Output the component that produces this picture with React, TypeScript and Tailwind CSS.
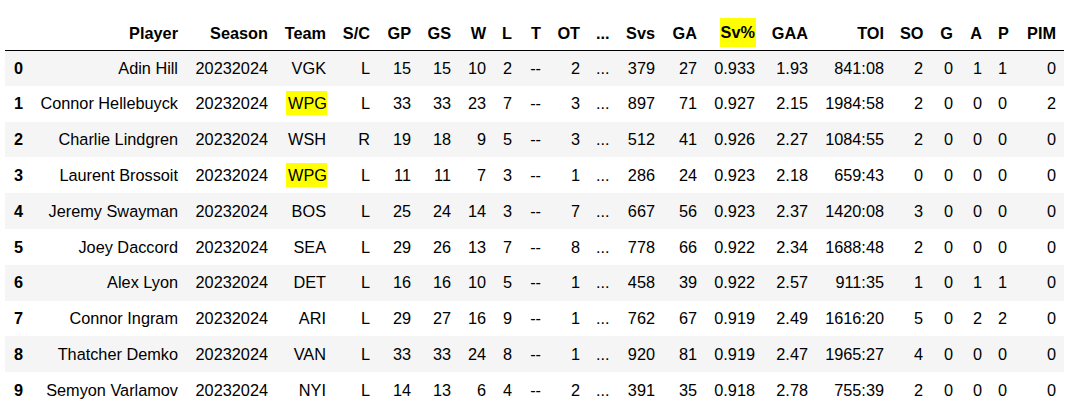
import React from 'react'

const columns = [
    { name: '', width: 27 },
    { name: 'Player', width: 154 },
    { name: 'Season', width: 90 },
    { name: 'Team', width: 58 },
    { name: 'S/C', width: 44 },
    { name: 'GP', width: 41 },
    { name: 'GS', width: 40 },
    { name: 'W', width: 35 },
    { name: 'L', width: 26 },
    { name: 'T', width: 29 },
    { name: 'OT', width: 39 },
    { name: '...', width: 29 },
    { name: 'Svs', width: 46 },
    { name: 'GA', width: 42 },
    { name: 'Sv%', width: 58 },
    { name: 'GAA', width: 53 },
    { name: 'TOI', width: 76 },
    { name: 'SO', width: 39 },
    { name: 'G', width: 30 },
    { name: 'A', width: 29 },
    { name: 'P', width: 25 },
    { name: 'PIM', width: 49 },
]

const rows = [
    ['Adin Hill', '20232024', 'VGK', 'L', '15', '15', '10', '2', '--', '2', '...', '379', '27', '0.933', '1.93', '841:08', '2', '0', '1', '1', '0'],
    ['Connor Hellebuyck', '20232024', 'WPG', 'L', '33', '33', '23', '7', '--', '3', '...', '897', '71', '0.927', '2.15', '1984:58', '2', '0', '0', '0', '2'],
    ['Charlie Lindgren', '20232024', 'WSH', 'R', '19', '18', '9', '5', '--', '3', '...', '512', '41', '0.926', '2.27', '1084:55', '2', '0', '0', '0', '0'],
    ['Laurent Brossoit', '20232024', 'WPG', 'L', '11', '11', '7', '3', '--', '1', '...', '286', '24', '0.923', '2.18', '659:43', '0', '0', '0', '0', '0'],
    ['Jeremy Swayman', '20232024', 'BOS', 'L', '25', '24', '14', '3', '--', '7', '...', '667', '56', '0.923', '2.37', '1420:08', '3', '0', '0', '0', '0'],
    ['Joey Daccord', '20232024', 'SEA', 'L', '29', '26', '13', '7', '--', '8', '...', '778', '66', '0.922', '2.34', '1688:48', '2', '0', '0', '0', '0'],
    ['Alex Lyon', '20232024', 'DET', 'L', '16', '16', '10', '5', '--', '1', '...', '458', '39', '0.922', '2.57', '911:35', '1', '0', '1', '1', '0'],
    ['Connor Ingram', '20232024', 'ARI', 'L', '29', '27', '16', '9', '--', '1', '...', '762', '67', '0.919', '2.49', '1616:20', '5', '0', '2', '2', '0'],
    ['Thatcher Demko', '20232024', 'VAN', 'L', '33', '33', '24', '8', '--', '1', '...', '920', '81', '0.919', '2.47', '1965:27', '4', '0', '0', '0', '0'],
    ['Semyon Varlamov', '20232024', 'NYI', 'L', '14', '13', '6', '4', '--', '2', '...', '391', '35', '0.918', '2.78', '755:39', '2', '0', '0', '0', '0'],
]

const App = () => {
    return (
        <div className="bg-white w-[1080px] h-[413px] pt-[16px] pl-[5px] text-black text-[16.3px] font-['Liberation_Sans',Arial,sans-serif]">
            <table className="table-fixed border-collapse w-[1059px]">
                <colgroup>
                    {columns.map((c, i) => (
                        <col key={i} style={{ width: c.width }} />
                    ))}
                </colgroup>
                <thead>
                    <tr className="h-[34px] border-b border-black">
                        {columns.map((c, i) => (
                            <th key={i} className="text-right font-bold px-[8px] whitespace-nowrap">
                                {c.name == 'Sv%' ? (
                                    <span className="bg-[#ffff00] inline-block leading-[29px] px-[1px] -mr-[1px]">Sv%</span>
                                ) : c.name}
                            </th>
                        ))}
                    </tr>
                </thead>
                <tbody>
                    {rows.map((r, i) => (
                        <tr key={i} className={i % 2 == 0 ? 'h-[35.8px] bg-[#f5f5f5]' : 'h-[35.8px] bg-white'}>
                            <th className="text-left font-bold pl-[9px]">{i}</th>
                            {r.map((v, j) => (
                                <td key={j} className="text-right px-[8px] whitespace-nowrap">
                                    {j == 2 && v == 'WPG' ? (
                                        <span className="bg-[#ffff00] inline-block leading-[24px] pl-[2px] -mr-[1px]">WPG</span>
                                    ) : v}
                                </td>
                            ))}
                        </tr>
                    ))}
                </tbody>
            </table>
        </div>
    )
}

export default App
